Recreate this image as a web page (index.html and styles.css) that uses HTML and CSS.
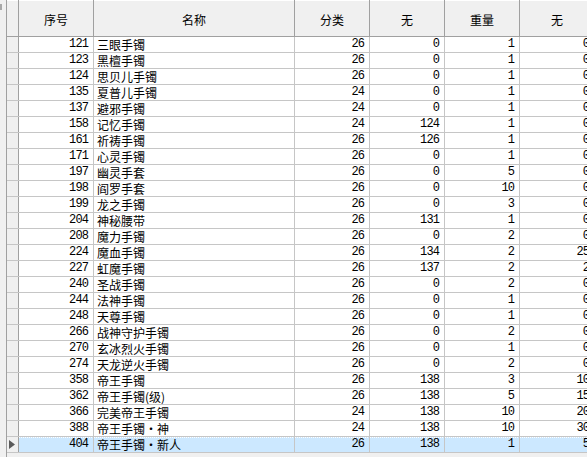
FILE: index.html
```html
<!DOCTYPE html>
<html>
<head>
<meta charset="utf-8">
<link rel="stylesheet" href="styles.css">
</head>
<body>
<div class="frame">
  <div class="gutter"><span class="mark"></span></div>
  <div class="grid">
    <div class="row head">
      <div class="ind"></div>
      <div class="hc">序号</div>
      <div class="hc">名称</div>
      <div class="hc">分类</div>
      <div class="hc">无</div>
      <div class="hc">重量</div>
      <div class="hc">无</div>
    </div>
    <div class="body">
      <div class="row"><div class="ind"></div><div class="n">121</div><div class="t">三眼手镯</div><div class="n">26</div><div class="n">0</div><div class="n">1</div><div class="n">0</div></div>
      <div class="row"><div class="ind"></div><div class="n">123</div><div class="t">黑檀手镯</div><div class="n">26</div><div class="n">0</div><div class="n">1</div><div class="n">0</div></div>
      <div class="row"><div class="ind"></div><div class="n">124</div><div class="t">思贝儿手镯</div><div class="n">26</div><div class="n">0</div><div class="n">1</div><div class="n">0</div></div>
      <div class="row"><div class="ind"></div><div class="n">135</div><div class="t">夏普儿手镯</div><div class="n">24</div><div class="n">0</div><div class="n">1</div><div class="n">0</div></div>
      <div class="row"><div class="ind"></div><div class="n">137</div><div class="t">避邪手镯</div><div class="n">24</div><div class="n">0</div><div class="n">1</div><div class="n">0</div></div>
      <div class="row"><div class="ind"></div><div class="n">158</div><div class="t">记忆手镯</div><div class="n">24</div><div class="n">124</div><div class="n">1</div><div class="n">0</div></div>
      <div class="row"><div class="ind"></div><div class="n">161</div><div class="t">祈祷手镯</div><div class="n">26</div><div class="n">126</div><div class="n">1</div><div class="n">0</div></div>
      <div class="row"><div class="ind"></div><div class="n">171</div><div class="t">心灵手镯</div><div class="n">26</div><div class="n">0</div><div class="n">1</div><div class="n">0</div></div>
      <div class="row"><div class="ind"></div><div class="n">197</div><div class="t">幽灵手套</div><div class="n">26</div><div class="n">0</div><div class="n">5</div><div class="n">0</div></div>
      <div class="row"><div class="ind"></div><div class="n">198</div><div class="t">阎罗手套</div><div class="n">26</div><div class="n">0</div><div class="n">10</div><div class="n">0</div></div>
      <div class="row"><div class="ind"></div><div class="n">199</div><div class="t">龙之手镯</div><div class="n">26</div><div class="n">0</div><div class="n">3</div><div class="n">0</div></div>
      <div class="row"><div class="ind"></div><div class="n">204</div><div class="t">神秘腰带</div><div class="n">26</div><div class="n">131</div><div class="n">1</div><div class="n">0</div></div>
      <div class="row"><div class="ind"></div><div class="n">208</div><div class="t">魔力手镯</div><div class="n">26</div><div class="n">0</div><div class="n">2</div><div class="n">0</div></div>
      <div class="row"><div class="ind"></div><div class="n">224</div><div class="t">魔血手镯</div><div class="n">26</div><div class="n">134</div><div class="n">2</div><div class="n">25</div></div>
      <div class="row"><div class="ind"></div><div class="n">227</div><div class="t">虹魔手镯</div><div class="n">26</div><div class="n">137</div><div class="n">2</div><div class="n">2</div></div>
      <div class="row"><div class="ind"></div><div class="n">240</div><div class="t">圣战手镯</div><div class="n">26</div><div class="n">0</div><div class="n">2</div><div class="n">0</div></div>
      <div class="row"><div class="ind"></div><div class="n">244</div><div class="t">法神手镯</div><div class="n">26</div><div class="n">0</div><div class="n">1</div><div class="n">0</div></div>
      <div class="row"><div class="ind"></div><div class="n">248</div><div class="t">天尊手镯</div><div class="n">26</div><div class="n">0</div><div class="n">1</div><div class="n">0</div></div>
      <div class="row"><div class="ind"></div><div class="n">266</div><div class="t">战神守护手镯</div><div class="n">26</div><div class="n">0</div><div class="n">2</div><div class="n">0</div></div>
      <div class="row"><div class="ind"></div><div class="n">270</div><div class="t">玄冰烈火手镯</div><div class="n">26</div><div class="n">0</div><div class="n">1</div><div class="n">0</div></div>
      <div class="row"><div class="ind"></div><div class="n">274</div><div class="t">天龙逆火手镯</div><div class="n">26</div><div class="n">0</div><div class="n">2</div><div class="n">0</div></div>
      <div class="row"><div class="ind"></div><div class="n">358</div><div class="t">帝王手镯</div><div class="n">26</div><div class="n">138</div><div class="n">3</div><div class="n">10</div></div>
      <div class="row"><div class="ind"></div><div class="n">362</div><div class="t">帝王手镯(级)</div><div class="n">26</div><div class="n">138</div><div class="n">5</div><div class="n">15</div></div>
      <div class="row"><div class="ind"></div><div class="n">366</div><div class="t">完美帝王手镯</div><div class="n">24</div><div class="n">138</div><div class="n">10</div><div class="n">20</div></div>
      <div class="row"><div class="ind"></div><div class="n">388</div><div class="t">帝王手镯・神</div><div class="n">24</div><div class="n">138</div><div class="n">10</div><div class="n">30</div></div>
      <div class="row sel"><div class="ind"><svg width="6" height="9" viewBox="0 0 6 9"><path d="M0 0 L6 4.5 L0 9 Z" fill="#5a5a5a"/></svg></div><div class="n">404</div><div class="t">帝王手镯・新人</div><div class="n">26</div><div class="n">138</div><div class="n">1</div><div class="n">5</div></div>
    </div>
  </div>
</div>
</body>
</html>
```

FILE: styles.css
```css
html, body {
  margin: 0;
  padding: 0;
  background: #f0f0f0;
}
.frame {
  width: 587px;
  height: 457px;
  overflow: hidden;
  display: flex;
  background: #f0f0f0;
}
.gutter {
  width: 6px;
  flex: none;
  border-right: 1px solid #a0a0a0;
  position: relative;
}
.mark {
  position: absolute;
  left: 0;
  top: 4px;
  width: 2px;
  height: 6px;
  background: #a8a8a8;
}
.grid {
  flex: none;
  width: 600px;
  display: flex;
  flex-direction: column;
}
.row {
  display: grid;
  grid-template-columns: 11px 74px 200px 74px 74px 74px 74px;
  column-gap: 1px;
  background: #c6c6c6;
  height: 15px;
}
.head {
  height: 36px;
  background: #a0a0a0;
  border-bottom: 1px solid #a0a0a0;
}
.head .ind,
.hc {
  background: #f0f0f0;
  border-top: 1px solid #ffffff;
}
.hc {
  font-family: "Noto Sans CJK SC", sans-serif;
  font-size: 12px;
  color: #000;
  display: flex;
  align-items: center;
  justify-content: center;
  padding-top: 1px;
}
.body {
  display: flex;
  flex-direction: column;
  row-gap: 1px;
  background: #c6c6c6;
  padding-bottom: 1px;
}
.ind {
  background: #f0f0f0;
  display: flex;
  align-items: center;
  justify-content: center;
}
.row .ind {
  box-shadow: 1px 0 0 #a0a0a0;
}
.n, .t {
  background: #ffffff;
  color: #000;
  line-height: 15px;
  white-space: nowrap;
  overflow: hidden;
}
.n {
  font-family: "Liberation Mono", monospace;
  font-size: 12px;
  letter-spacing: -0.9px;
  text-align: right;
  padding-right: 5px;
}
.t {
  font-family: "Noto Sans CJK SC", sans-serif;
  font-size: 12px;
  padding-left: 3px;
}
.sel .n, .sel .t {
  background-image: linear-gradient(to right, #ffffff 50%, transparent 50%);
  background-size: 2px 1px;
  background-repeat: repeat-x;
  background-position: 0 0;
  background-color: #cce8ff;
}
.sel .ind svg {
  margin-left: -1px;
}
```
